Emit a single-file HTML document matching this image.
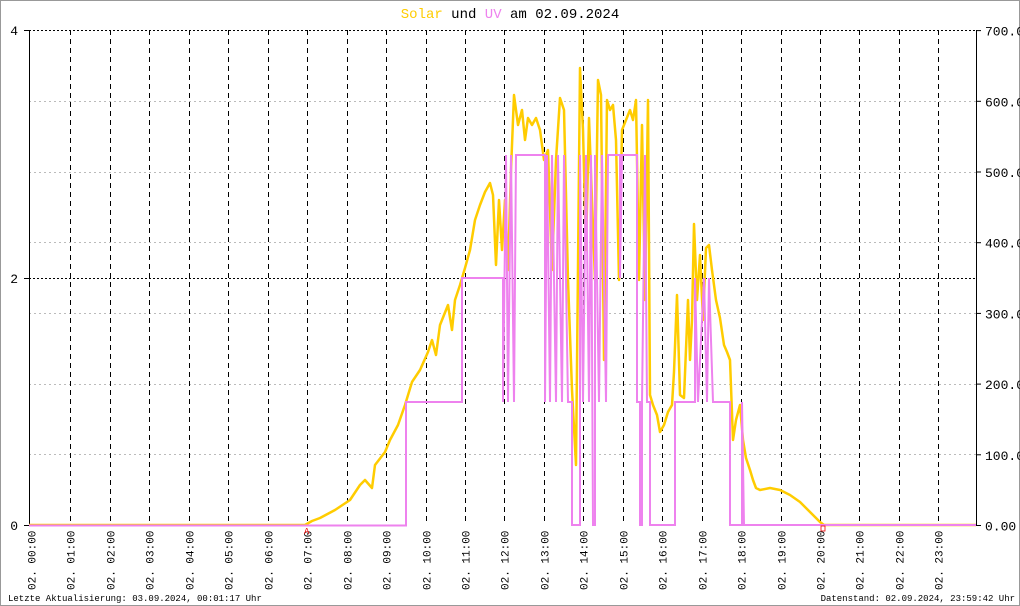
<!DOCTYPE html>
<html><head><meta charset="utf-8"><style>
html,body{margin:0;padding:0;background:#fff;}
svg{display:block;}
text{font-family:"Liberation Mono","DejaVu Sans Mono",monospace;}
</style></head><body>
<svg width="1020" height="606" viewBox="0 0 1020 606" xmlns="http://www.w3.org/2000/svg">
<rect x="0.5" y="0.5" width="1019" height="605" fill="#fff" stroke="#999"/>
<text x="510" y="18" font-size="14" text-anchor="middle"><tspan fill="#ffcc00">Solar</tspan><tspan fill="#000"> und </tspan><tspan fill="#ee82ee">UV</tspan><tspan fill="#000"> am 02.09.2024</tspan></text>
<g stroke="#bbb" stroke-dasharray="2,3" stroke-width="1">
<line x1="29" y1="101.5" x2="976" y2="101.5"/>
<line x1="29" y1="172.5" x2="976" y2="172.5"/>
<line x1="29" y1="242.5" x2="976" y2="242.5"/>
<line x1="29" y1="313.5" x2="976" y2="313.5"/>
<line x1="29" y1="384.5" x2="976" y2="384.5"/>
<line x1="29" y1="454.5" x2="976" y2="454.5"/>
</g>
<g stroke="#000" stroke-dasharray="2,2" stroke-width="1">
<line x1="29" y1="30.5" x2="976" y2="30.5"/>
<line x1="29" y1="278.5" x2="976" y2="278.5"/>
</g>
<g stroke="#000" stroke-dasharray="5,4" stroke-width="1" id="vg"></g>
<g id="xl" font-size="11" fill="#000"></g>
<line x1="29.5" y1="30" x2="29.5" y2="526" stroke="#000"/>
<line x1="976.5" y1="30" x2="976.5" y2="526" stroke="#000"/>
<g stroke="#000"><line x1="24" y1="30.5" x2="29" y2="30.5"/><line x1="24" y1="278.5" x2="29" y2="278.5"/><line x1="24" y1="525.5" x2="29" y2="525.5"/></g>
<g font-size="13" text-anchor="end"><text x="18" y="35">4</text><text x="18" y="283">2</text><text x="18" y="530">0</text></g>
<g font-size="13" id="rl"></g>
<polyline fill="none" stroke="#ffcc00" stroke-width="2.5" stroke-linejoin="round" points="29,525 305,525 312,521 320,518 335,510 350,500 360,485 365,480 372,488 375,465 385,452 390,440 398,425 405,405 412,382 420,370 428,352 432,340 436,355 440,325 448,305 452,330 455,300 460,285 465,268 470,250 475,220 480,205 485,192 490,183 493,195 496,265 499,200 502,250 505,200 508,270 511,170 514,95 518,125 522,110 525,140 528,118 532,125 536,118 540,130 544,160 548,150 552,270 556,160 560,98 564,110 568,280 572,390 576,465 580,68 583,130 586,250 589,118 592,200 595,280 598,80 601,95 604,360 607,100 610,110 613,105 616,140 619,280 622,130 626,120 630,110 633,120 636,100 639,280 642,125 645,300 648,100 650,395 653,405 657,415 660,432 664,425 668,412 672,405 674,372 677,295 680,395 684,398 688,300 690,360 692,320 694,224 697,300 700,255 703,320 706,248 709,245 712,270 716,300 720,318 724,345 727,352 730,360 733,440 736,420 740,405 743,440 746,458 750,470 753,480 756,488 760,490 770,488 780,490 790,495 800,502 810,512 820,522 824,525 976,525"/>
<polyline fill="none" stroke="#ee82ee" stroke-width="2" points="29,525.5 406,525.5 406,402 462,402 462,278 503,278 503,402 506,155 508,402 511,155 514,402 516,155 545,155 545,402 547,155 550,402 552,155 556,402 558,155 562,402 564,155 568,402 572,402 572,525 580,525 580,155 583,402 586,155 589,402 591,155 593,525 595,525 595,155 599,402 602,155 606,402 608,155 620,155 620,278 622,155 637,155 637,402 640,402 640,525 642,525 642,402 645,155 647,402 650,402 650,525 675,525 675,402 695,402 695,278 698,402 704,278 707,402 709,278 713,402 730,402 730,525 742,525 742,402 744,525 976,525"/>
<text x="304" y="534" font-size="9" fill="#e00">A</text>
<rect x="821" y="526" width="4" height="5" fill="none" stroke="#e00" stroke-width="0.8"/>
<text x="8" y="601" font-size="9">Letzte Aktualisierung: 03.09.2024, 00:01:17 Uhr</text>
<text x="1015" y="601" font-size="9" text-anchor="end">Datenstand: 02.09.2024, 23:59:42 Uhr</text>
<script>
var ns="http://www.w3.org/2000/svg";
var vg=document.getElementById('vg'),xl=document.getElementById('xl'),rl=document.getElementById('rl');
for(var h=0;h<24;h++){var x=Math.round(31+h*39.45)+0.5;
if(h>0){var l=document.createElementNS(ns,'line');l.setAttribute('x1',x);l.setAttribute('x2',x);l.setAttribute('y1',30);l.setAttribute('y2',525);vg.appendChild(l);}
var t=document.createElementNS(ns,'text');t.setAttribute('transform','translate('+(x+4)+',590) rotate(-90)');t.textContent='02. '+(h<10?'0':'')+h+':00';xl.appendChild(t);}
for(var i=0;i<=7;i++){var y=525.5-i*70.7;var l=document.createElementNS(ns,'line');l.setAttribute('x1',976);l.setAttribute('x2',981);l.setAttribute('y1',y);l.setAttribute('y2',y);l.setAttribute('stroke','#000');rl.appendChild(l);
var t=document.createElementNS(ns,'text');t.setAttribute('x',985);t.setAttribute('y',y+5);t.textContent=(i*100)+'.00';rl.appendChild(t);}
</script>
</svg>
</body></html>
